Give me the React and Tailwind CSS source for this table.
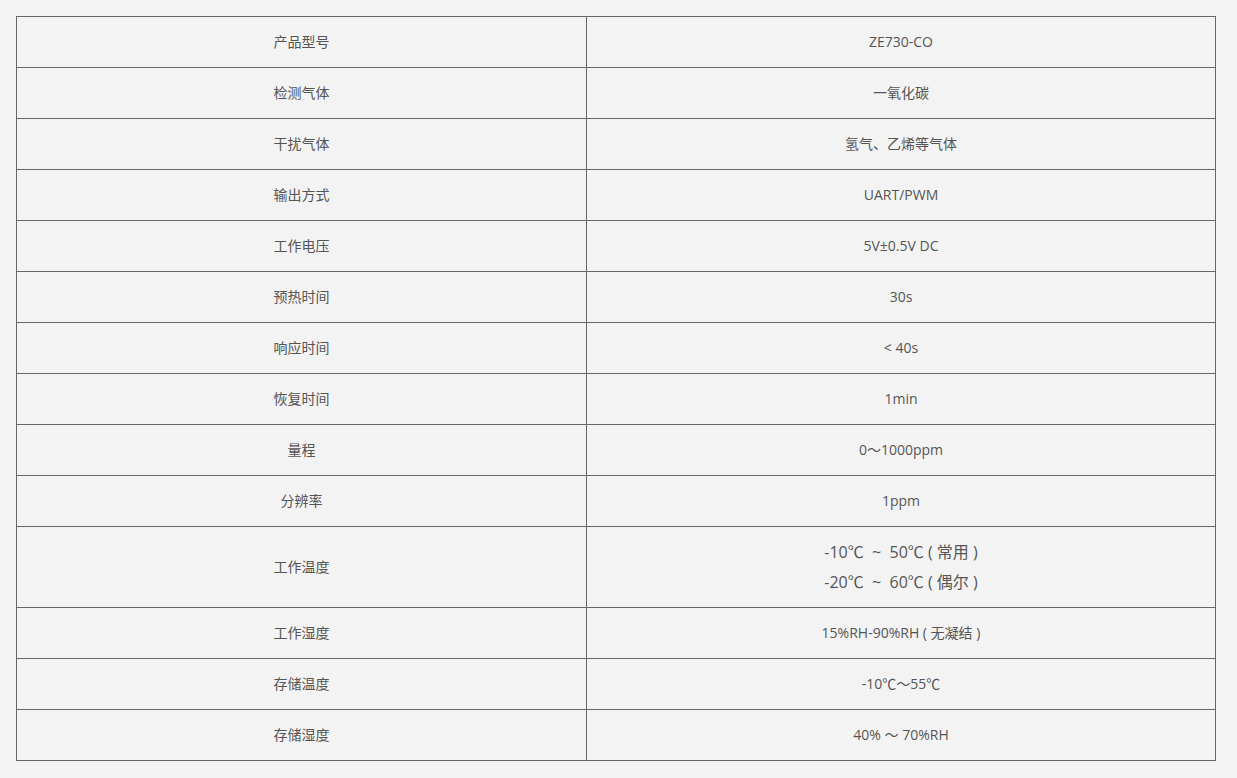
const rows = [
  ["产品型号", "ZE730-CO"],
  ["检测气体", "一氧化碳"],
  ["干扰气体", "氢气、乙烯等气体"],
  ["输出方式", "UART/PWM"],
  ["工作电压", "5V±0.5V DC"],
  ["预热时间", "30s"],
  ["响应时间", "< 40s"],
  ["恢复时间", "1min"],
  ["量程", "0～1000ppm"],
  ["分辨率", "1ppm"],
  ["工作温度", null],
  ["工作湿度", "15%RH-90%RH ( 无凝结 )"],
  ["存储温度", "-10℃～55℃"],
  ["存储湿度", "40% ～ 70%RH"],
];

export default function App() {
  return (
    <div
      className="min-h-[778px] bg-[#f3f3f3] pt-4 pl-4 text-[#555]"
      style={{ fontFamily: "'Open Sans', 'Noto Sans CJK SC', sans-serif" }}
    >
      <table className="w-[1200px] border-collapse border border-[#666] text-[14px]">
        <tbody>
          {rows.map(([k, v]) => (
            <tr key={k}>
              <td className="w-[570px] h-[51px] pb-[2px] border border-[#666] text-center align-middle">{k}</td>
              <td className="h-[51px] pb-[2px] border border-[#666] text-center align-middle">
                {v === null ? (
                  <div className="text-[16px] leading-[30px] pt-[10px] pb-[8px] whitespace-pre">
                    <div>-10℃  ~  50℃ ( 常用 )</div>
                    <div>-20℃  ~  60℃ ( 偶尔 )</div>
                  </div>
                ) : (
                  v
                )}
              </td>
            </tr>
          ))}
        </tbody>
      </table>
    </div>
  );
}
